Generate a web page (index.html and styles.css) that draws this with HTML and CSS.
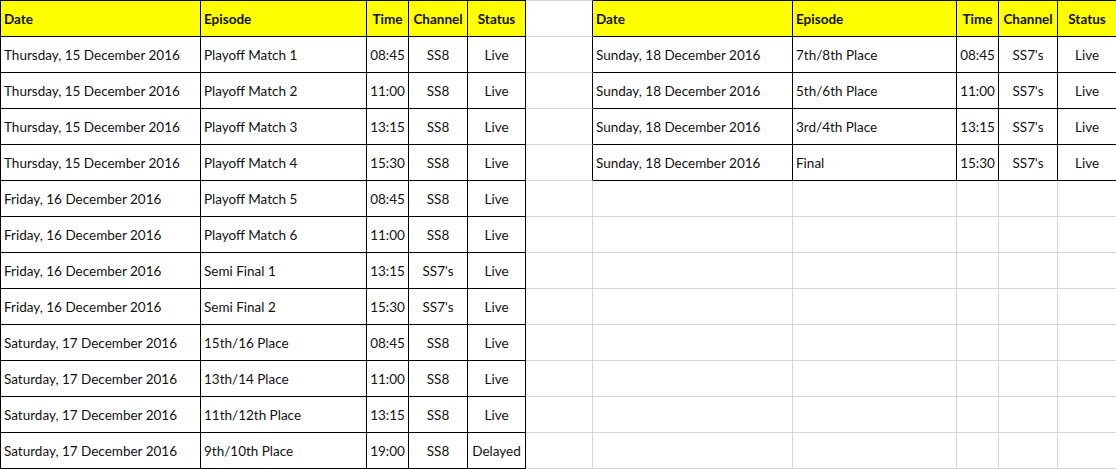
FILE: index.html
```html
<!DOCTYPE html>
<html>
<head>
<meta charset="utf-8">
<link rel="stylesheet" href="styles.css">
</head>
<body>
<div class="sheet">
  <div class="c hd b first l">Date</div><div class="c hd b l">Episode</div><div class="c hd b">Time</div><div class="c hd b">Channel</div><div class="c hd b">Status</div><div class="c top rb"></div><div class="c hd b l">Date</div><div class="c hd b l">Episode</div><div class="c hd b">Time</div><div class="c hd b">Channel</div><div class="c hd b">Status</div>

  <div class="c b first l">Thursday, 15 December 2016</div><div class="c b l">Playoff Match 1</div><div class="c b">08:45</div><div class="c b">SS8</div><div class="c b">Live</div><div class="c rb"></div><div class="c b l">Sunday, 18 December 2016</div><div class="c b l">7th/8th Place</div><div class="c b">08:45</div><div class="c b">SS7's</div><div class="c b">Live</div>

  <div class="c b first l">Thursday, 15 December 2016</div><div class="c b l">Playoff Match 2</div><div class="c b">11:00</div><div class="c b">SS8</div><div class="c b">Live</div><div class="c rb"></div><div class="c b l">Sunday, 18 December 2016</div><div class="c b l">5th/6th Place</div><div class="c b">11:00</div><div class="c b">SS7's</div><div class="c b">Live</div>

  <div class="c b first l">Thursday, 15 December 2016</div><div class="c b l">Playoff Match 3</div><div class="c b">13:15</div><div class="c b">SS8</div><div class="c b">Live</div><div class="c rb"></div><div class="c b l">Sunday, 18 December 2016</div><div class="c b l">3rd/4th Place</div><div class="c b">13:15</div><div class="c b">SS7's</div><div class="c b">Live</div>

  <div class="c b first l">Thursday, 15 December 2016</div><div class="c b l">Playoff Match 4</div><div class="c b">15:30</div><div class="c b">SS8</div><div class="c b">Live</div><div class="c rb"></div><div class="c b l">Sunday, 18 December 2016</div><div class="c b l">Final</div><div class="c b">15:30</div><div class="c b">SS7's</div><div class="c b">Live</div>

  <div class="c b first l">Friday, 16 December 2016</div><div class="c b l">Playoff Match 5</div><div class="c b">08:45</div><div class="c b">SS8</div><div class="c b">Live</div><div class="c"></div><div class="c"></div><div class="c"></div><div class="c"></div><div class="c"></div><div class="c"></div>

  <div class="c b first l">Friday, 16 December 2016</div><div class="c b l">Playoff Match 6</div><div class="c b">11:00</div><div class="c b">SS8</div><div class="c b">Live</div><div class="c"></div><div class="c"></div><div class="c"></div><div class="c"></div><div class="c"></div><div class="c"></div>

  <div class="c b first l">Friday, 16 December 2016</div><div class="c b l">Semi Final 1</div><div class="c b">13:15</div><div class="c b">SS7's</div><div class="c b">Live</div><div class="c"></div><div class="c"></div><div class="c"></div><div class="c"></div><div class="c"></div><div class="c"></div>

  <div class="c b first l">Friday, 16 December 2016</div><div class="c b l">Semi Final 2</div><div class="c b">15:30</div><div class="c b">SS7's</div><div class="c b">Live</div><div class="c"></div><div class="c"></div><div class="c"></div><div class="c"></div><div class="c"></div><div class="c"></div>

  <div class="c b first l">Saturday, 17 December 2016</div><div class="c b l">15th/16 Place</div><div class="c b">08:45</div><div class="c b">SS8</div><div class="c b">Live</div><div class="c"></div><div class="c"></div><div class="c"></div><div class="c"></div><div class="c"></div><div class="c"></div>

  <div class="c b first l">Saturday, 17 December 2016</div><div class="c b l">13th/14 Place</div><div class="c b">11:00</div><div class="c b">SS8</div><div class="c b">Live</div><div class="c"></div><div class="c"></div><div class="c"></div><div class="c"></div><div class="c"></div><div class="c"></div>

  <div class="c b first l">Saturday, 17 December 2016</div><div class="c b l">11th/12th Place</div><div class="c b">13:15</div><div class="c b">SS8</div><div class="c b">Live</div><div class="c"></div><div class="c"></div><div class="c"></div><div class="c"></div><div class="c"></div><div class="c"></div>

  <div class="c b first l">Saturday, 17 December 2016</div><div class="c b l">9th/10th Place</div><div class="c b">19:00</div><div class="c b">SS8</div><div class="c b">Delayed</div><div class="c"></div><div class="c"></div><div class="c"></div><div class="c"></div><div class="c"></div><div class="c"></div>
</div>
</body>
</html>
```

FILE: styles.css
```css
html, body {
  margin: 0;
  padding: 0;
  background: #ffffff;
}

.sheet {
  display: grid;
  grid-template-columns: 201px 166px 42px 59px 58px 67px 200px 164px 42px 59px 59px;
  grid-template-rows: 37px repeat(12, 36px);
  font-family: "Lato", "Liberation Sans", sans-serif;
  font-size: 13.5px;
  color: #111111;
  width: 1117px;
}

.c {
  box-sizing: border-box;
  border-right: 1px solid #d4d4d4;
  border-bottom: 1px solid #d4d4d4;
  display: flex;
  align-items: center;
  justify-content: center;
  padding: 1px 3px 0 3px;
  white-space: nowrap;
  overflow: hidden;
}

.c.l {
  justify-content: flex-start;
}

.c.b {
  border-right-color: #000000;
  border-bottom-color: #000000;
}

.c.rb {
  border-right-color: #000000;
}

.c.hd {
  background: #ffff00;
  font-weight: bold;
  border-top: 1px solid #000000;
  padding-top: 0;
}

.c.top {
  border-top: 1px solid #d4d4d4;
}

.c.first {
  border-left: 1px solid #000000;
  padding-left: 3px;
}
```
